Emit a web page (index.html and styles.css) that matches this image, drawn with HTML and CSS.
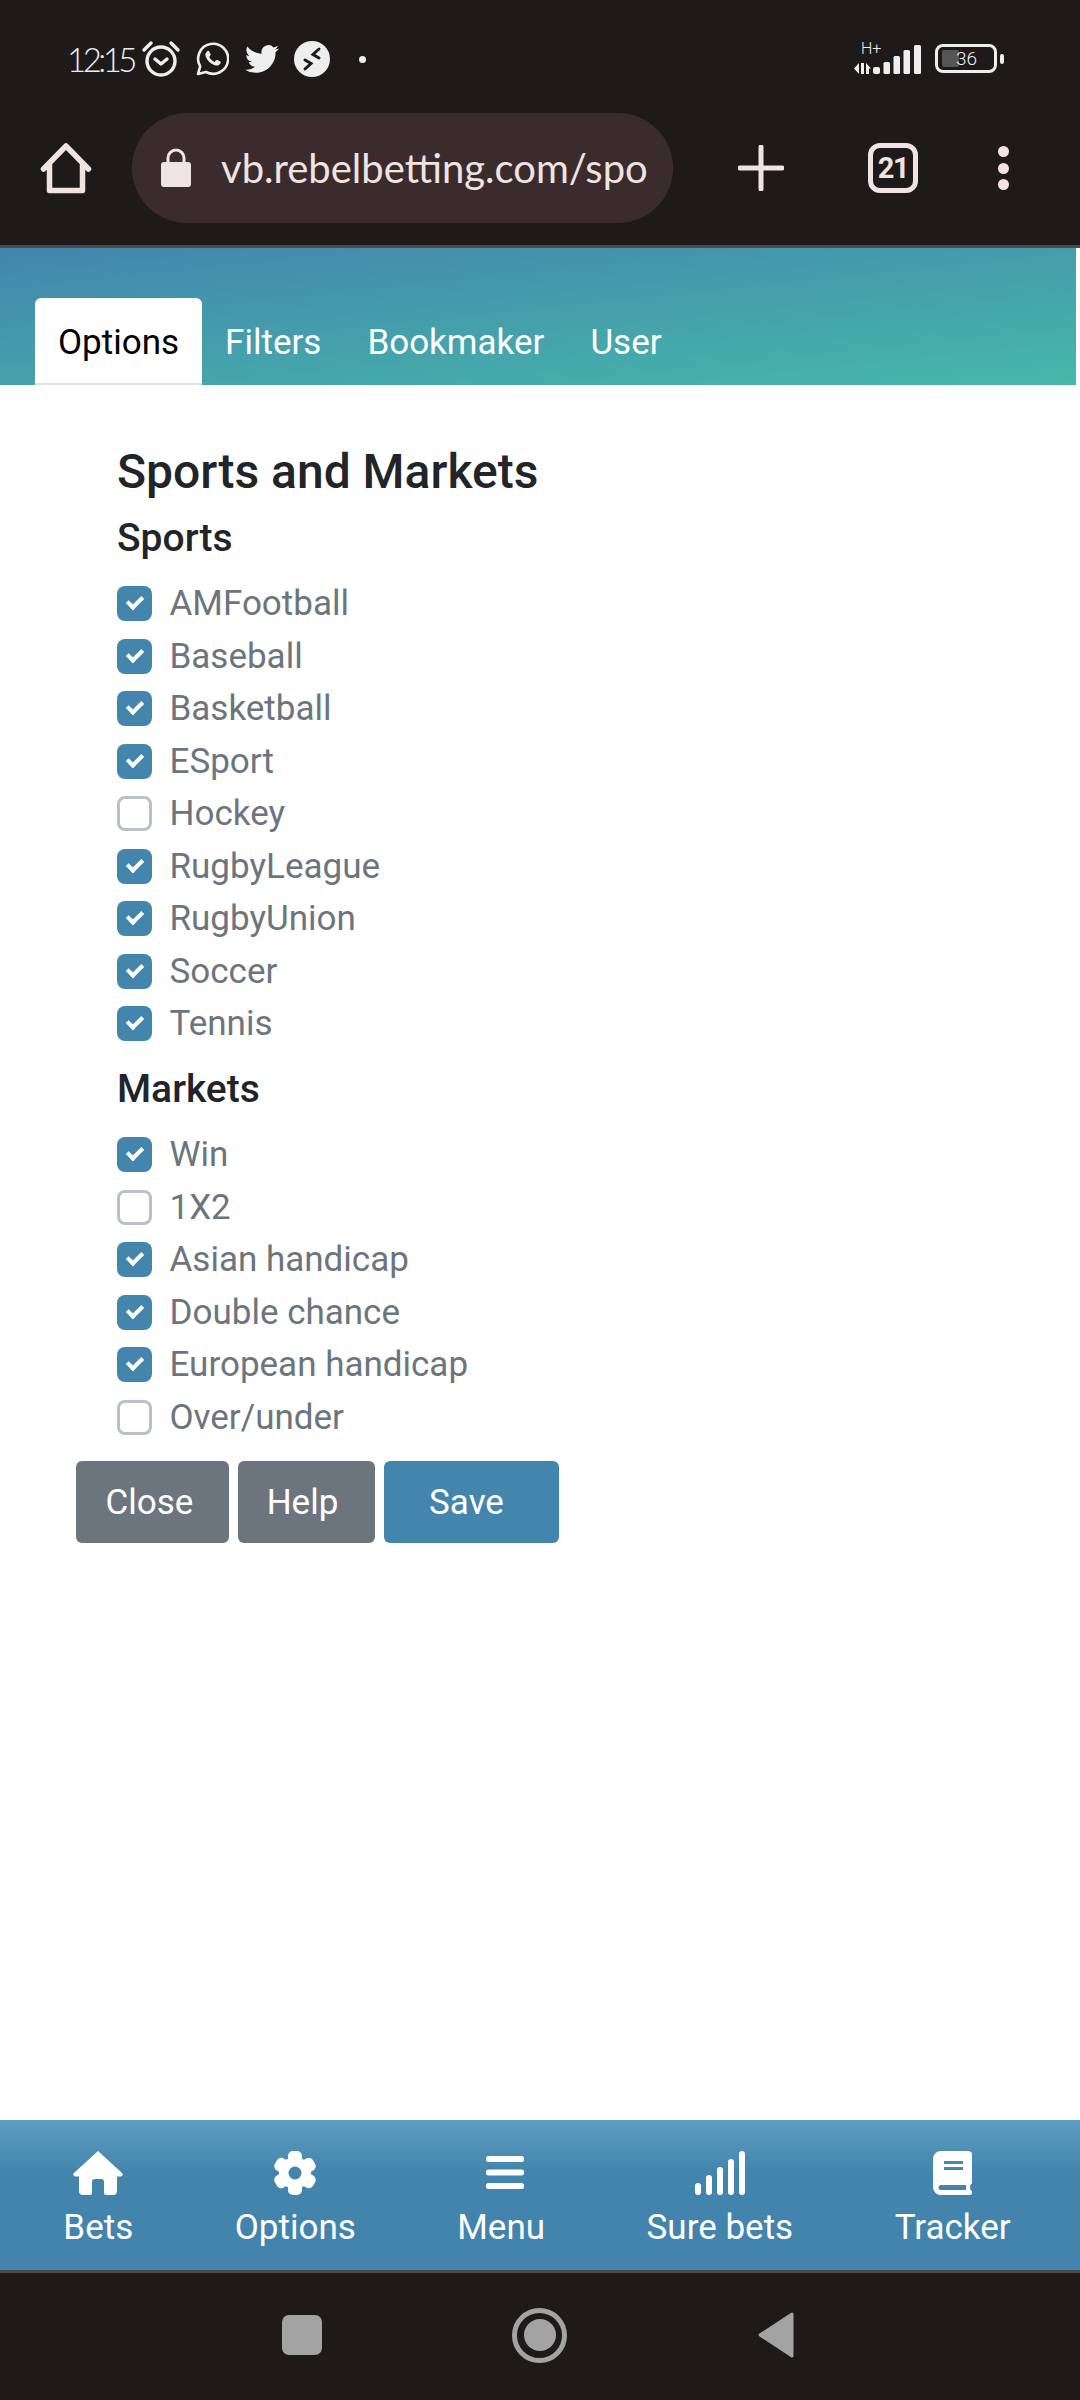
FILE: index.html
```html
<!DOCTYPE html>
<html lang="en">
<head>
    <meta charset="UTF-8">
    <meta name="viewport" content="width=device-width, initial-scale=1.0">
    <title>Sports and Markets</title>
    <link rel="stylesheet" href="styles.css">
</head>
<body>
    <!-- Phone status bar -->
    <div class="status-bar">
        <div class="status-left">
            <span class="clock">12:15</span>
            <svg class="alarm-icon" viewBox="0 0 40 40" width="40" height="40">
                <circle cx="20" cy="22" r="14" fill="none" stroke="#eee" stroke-width="3.4"/>
                <path d="M14 20l6 5 6-5" fill="none" stroke="#eee" stroke-width="3.4" stroke-linecap="round" stroke-linejoin="round"/>
                <path d="M3 11L10 4M37 11L30 4" fill="none" stroke="#eee" stroke-width="3.4" stroke-linecap="round"/>
            </svg>
            <svg class="whatsapp-icon" viewBox="0 0 34 36" width="34" height="36">
                <path d="M3 33l2.200-7.600A15 15 0 1 1 11 31z" fill="none" stroke="#eee" stroke-width="2.600" stroke-linejoin="round"/>
                <path d="M11.500 10.500c1-1 2.300-1 2.800 0l1.200 2.600c.3.700 0 1.200-.5 1.800l-.8 1c1.200 2.300 3 3.900 5.400 5l1.200-1.400c.5-.6 1.100-.7 1.700-.4l2.500 1.200c.9.500 1 1.400.4 2.300-1.200 1.900-3.400 2.500-5.800 1.600-4.300-1.600-7.500-4.800-9-9-.7-2-.2-3.600 1.900-4.700z" fill="#eee"/>
            </svg>
            <svg class="twitter-icon" viewBox="0 0 24 24" width="34" height="34">
                <path d="M23.950 4.570a10 10 0 0 1-2.820.77 4.960 4.960 0 0 0 2.160-2.720c-.95.550-2 .96-3.130 1.190a4.920 4.920 0 0 0-8.380 4.480C7.690 8.100 4.070 6.130 1.640 3.160a4.820 4.820 0 0 0-.67 2.480c0 1.710.87 3.210 2.190 4.100a4.900 4.900 0 0 1-2.230-.62v.06a4.920 4.920 0 0 0 3.950 4.830 5 5 0 0 1-2.210.08 4.940 4.940 0 0 0 4.600 3.420A9.870 9.870 0 0 1 0 19.540a14 14 0 0 0 7.560 2.210c9.050 0 14-7.500 14-13.980 0-.21 0-.42-.02-.63a9.940 9.940 0 0 0 2.460-2.550z" fill="#eee"/>
            </svg>
            <svg class="vpn-icon" viewBox="0 0 36 36" width="36" height="36">
                <circle cx="18" cy="18" r="18" fill="#eee"/>
                <path d="M11 19l6 3.500-6 5.500M25 8l-6 5.500 6 3.500" fill="none" stroke="#1f1a1a" stroke-width="3" stroke-linecap="round"/>
            </svg>
            <span class="more-dot"></span>
        </div>
        <div class="status-right">
            <div class="signal">
                <span class="signal-type">H+</span>
                <svg viewBox="0 0 67 29" width="67" height="29">
                    <path d="M5 18v11L0 23.500zM7 18h3v11H7zM12 18l5 5.500h-2V29h-3z" fill="#eee"/>
                    <rect x="19" y="22" width="7" height="7" rx="2" fill="#eee"/>
                    <rect x="29.500" y="17" width="6.500" height="12" rx="1.500" fill="#eee"/>
                    <rect x="39.500" y="11" width="6.500" height="18" rx="1.500" fill="#eee"/>
                    <rect x="49.500" y="5" width="6.500" height="24" rx="1.500" fill="#eee"/>
                    <rect x="60" y="0" width="7" height="29" rx="1.500" fill="#eee"/>
                </svg>
            </div>
            <div class="battery">
                <div class="battery-body"><span class="battery-level"></span><span class="battery-text">36</span></div>
                <span class="battery-tip"></span>
            </div>
        </div>
    </div>

    <!-- Browser toolbar -->
    <div class="toolbar">
        <svg class="toolbar-home" viewBox="0 0 52 52" width="52" height="52">
            <path d="M3.500 26L26 3l22.500 23M9.500 22v25.500h33V22" fill="none" stroke="#f0e4e2" stroke-width="5.500" stroke-linecap="round" stroke-linejoin="round"/>
        </svg>
        <div class="omnibox">
            <svg viewBox="0 0 30 40" width="30" height="40">
                <path d="M7 16v-6a8 8 0 0 1 16 0v6" fill="none" stroke="#f0e4e2" stroke-width="3"/>
                <rect x="0" y="14" width="30" height="25" rx="3" fill="#f0e4e2"/>
            </svg>
            <span class="url">vb.rebelbetting.com/spo</span>
        </div>
        <svg class="toolbar-plus" viewBox="0 0 46 46" width="46" height="46">
            <path d="M23 2v42M2 23h42" stroke="#f0e4e2" stroke-width="5" stroke-linecap="round"/>
        </svg>
        <div class="tab-count">21</div>
        <div class="toolbar-menu"><span></span><span></span><span></span></div>
    </div>

    <!-- Site header with tabs -->
    <div class="site-header">
        <ul class="tabs">
            <li class="tab active">Options</li>
            <li class="tab">Filters</li>
            <li class="tab">Bookmaker</li>
            <li class="tab">User</li>
        </ul>
    </div>

    <div class="content">
        <h2>Sports and Markets</h2>
        <h3 class="sports-title">Sports</h3>
        <ul class="check-list sports-list">
            <li class="check on">AMFootball</li>
            <li class="check on">Baseball</li>
            <li class="check on">Basketball</li>
            <li class="check on">ESport</li>
            <li class="check">Hockey</li>
            <li class="check on">RugbyLeague</li>
            <li class="check on">RugbyUnion</li>
            <li class="check on">Soccer</li>
            <li class="check on">Tennis</li>
        </ul>
        <h3 class="markets-title">Markets</h3>
        <ul class="check-list markets-list">
            <li class="check on">Win</li>
            <li class="check">1X2</li>
            <li class="check on">Asian handicap</li>
            <li class="check on">Double chance</li>
            <li class="check on">European handicap</li>
            <li class="check">Over/under</li>
        </ul>
        <div class="buttons">
            <button class="btn btn-close">Close</button>
            <button class="btn btn-help">Help</button>
            <button class="btn btn-save">Save</button>
        </div>
    </div>

    <!-- Site bottom menu -->
    <div class="bottom-menu">
        <div class="menu-item">
            <svg viewBox="0 0 50 44" width="50" height="44">
                <path d="M25 0L49 22c1.500 1.500.5 3.500-1.500 3.500H44V40a4 4 0 0 1-4 4h-7a2 2 0 0 1-2-2V31a3 3 0 0 0-3-3h-6a3 3 0 0 0-3 3v11a2 2 0 0 1-2 2h-7a4 4 0 0 1-4-4V25.500H2.500C.5 25.500-.5 23.500 1 22z" fill="#fff"/>
            </svg>
            <span>Bets</span>
        </div>
        <div class="menu-item">
            <svg viewBox="-22 -22 44 44" width="44" height="44">
                <g fill="#fff">
                    <circle r="16"/>
                    <rect x="-7" y="-22" width="14" height="44" rx="5"/>
                    <rect x="-7" y="-22" width="14" height="44" rx="5" transform="rotate(60)"/>
                    <rect x="-7" y="-22" width="14" height="44" rx="5" transform="rotate(120)"/>
                </g>
                <circle r="6.500" fill="#4284ac"/>
            </svg>
            <span>Options</span>
        </div>
        <div class="menu-item">
            <svg class="menu-icon" viewBox="0 0 38 44" width="38" height="44">
                <rect x="0" y="5" width="38" height="6" rx="2.500" fill="#fff"/>
                <rect x="0" y="18.500" width="38" height="6" rx="2.500" fill="#fff"/>
                <rect x="0" y="32" width="38" height="6" rx="2.500" fill="#fff"/>
            </svg>
            <span>Menu</span>
        </div>
        <div class="menu-item">
            <svg viewBox="0 0 50 44" width="50" height="44">
                <rect x="0" y="32" width="6" height="12" rx="3" fill="#fff"/>
                <rect x="11" y="24" width="6" height="20" rx="3" fill="#fff"/>
                <rect x="22" y="16" width="6" height="28" rx="3" fill="#fff"/>
                <rect x="33" y="8" width="6" height="36" rx="3" fill="#fff"/>
                <rect x="44" y="0" width="6" height="44" rx="3" fill="#fff"/>
            </svg>
            <span>Sure bets</span>
        </div>
        <div class="menu-item">
            <svg viewBox="0 0 39 44" width="39" height="44">
                <path fill-rule="evenodd" d="M8 0h27a4 4 0 0 1 4 4v27c0 1.500-.7 2.500-1.800 3v4.800c1 .4 1.800 1 1.800 2.200v.5a2.500 2.500 0 0 1-2.500 2.500H8a8 8 0 0 1-8-8V8a8 8 0 0 1 8-8zM11 10v3h19v-3zM11 16v3h19v-3zM8 34a2.500 2.500 0 0 0 0 5h25v-5z" fill="#fff"/>
            </svg>
            <span>Tracker</span>
        </div>
    </div>

    <!-- Android navigation bar -->
    <div class="nav-bar">
        <span class="nav-square"></span>
        <span class="nav-circle"><span></span></span>
        <svg viewBox="0 0 38 46" width="38" height="46">
            <path d="M35 2v42L3 23z" fill="#a3a3a3" stroke="#a3a3a3" stroke-width="3" stroke-linejoin="round"/>
        </svg>
    </div>
</body>
</html>
```
FILE: styles.css
```css
* {
    box-sizing: border-box;
}

body {
    font-family: Roboto, Arial, sans-serif;
    background-color: #fff;
    margin: 0;
    padding: 0;
    width: 1080px;
    height: 2400px;
    display: flex;
    flex-direction: column;
    overflow: hidden;
}

/* status bar */
.status-bar {
    height: 113px;
    background-color: #1f1a1a;
    display: flex;
    justify-content: space-between;
    padding: 40px 76px 0 67px;
    color: #eee;
}

.status-left {
    display: flex;
    align-items: center;
    height: 38px;
}

.clock {
    font-family: Lato, sans-serif;
    font-weight: 300;
    font-size: 33px;
    letter-spacing: -3.500px;
    width: 74px;
}

.alarm-icon {
    margin-right: 14px;
}

.whatsapp-icon {
    margin-right: 16px;
}

.twitter-icon {
    margin-right: 15px;
}

.more-dot {
    width: 7px;
    height: 7px;
    border-radius: 50%;
    background-color: #eee;
    margin-left: 29px;
}

.status-right {
    display: flex;
    align-items: flex-start;
    gap: 14px;
}

.signal {
    position: relative;
    width: 67px;
    height: 29px;
    margin-top: 5px;
}

.signal svg {
    display: block;
}

.signal-type {
    position: absolute;
    left: 7px;
    top: -4px;
    font-size: 16px;
    line-height: 16px;
    font-weight: 300;
}

.battery {
    display: flex;
    align-items: center;
    height: 29px;
    margin-top: 4px;
    gap: 3px;
}

.battery-body {
    position: relative;
    width: 62px;
    height: 29px;
    border: 3px solid #eee;
    border-radius: 8px;
}

.battery-level {
    position: absolute;
    left: 4px;
    top: 3px;
    bottom: 3px;
    width: 17px;
    background-color: #555;
    border-radius: 2px;
}

.battery-text {
    position: absolute;
    left: 18px;
    top: 0;
    font-size: 19px;
    line-height: 23px;
    font-weight: 300;
}

.battery-tip {
    width: 4px;
    height: 10px;
    background-color: #eee;
    border-radius: 2px;
}

/* browser toolbar */
.toolbar {
    height: 135px;
    background-color: #1f1a1a;
    border-bottom: 3px solid #504a4a;
    display: flex;
    align-items: flex-start;
    padding-left: 40px;
}

.toolbar-home {
    margin-top: 30px;
}

.omnibox {
    width: 541px;
    height: 110px;
    margin-left: 40px;
    background-color: #3a2c2c;
    border-radius: 55px;
    display: flex;
    align-items: center;
    padding-left: 29px;
    gap: 30px;
}

.url {
    font-family: Lato, sans-serif;
    font-size: 40px;
    color: #f0e4e2;
    white-space: nowrap;
}

.toolbar-plus {
    margin: 32px 0 0 65px;
}

.tab-count {
    width: 50px;
    height: 50px;
    margin: 30px 0 0 84px;
    border: 5px solid #f0e4e2;
    border-radius: 12px;
    color: #f0e4e2;
    font-size: 29px;
    font-weight: 700;
    letter-spacing: -1.500px;
    display: flex;
    align-items: center;
    justify-content: center;
}

.toolbar-menu {
    margin: 33px 0 0 80px;
    display: flex;
    flex-direction: column;
    gap: 5.500px;
}

.toolbar-menu span {
    width: 11px;
    height: 11px;
    border-radius: 50%;
    background-color: #f0e4e2;
}

/* site header */
.site-header {
    height: 137px;
    margin-right: 4px;
    background: linear-gradient(174deg, #4286ad 0%, #47b8aa 100%);
    display: flex;
    align-items: flex-end;
    padding-left: 35px;
}

.tabs {
    list-style: none;
    margin: 0;
    padding: 0;
    display: flex;
}

.tab {
    height: 87px;
    line-height: 90px;
    padding: 0 23px;
    font-size: 35px;
    color: #fff;
}

.tab.active {
    color: #000;
    background-color: #fff;
    border-radius: 6px 6px 0 0;
    border-bottom: 2px solid #dee2e6;
}

/* page content */
.content {
    flex: 1;
    padding: 61px 0 0 117px;
}

h2 {
    margin: 0;
    font-size: 48px;
    line-height: 52px;
    font-weight: 500;
    color: #212529;
}

h3 {
    margin: 0;
    font-size: 39px;
    line-height: 46px;
    font-weight: 500;
    color: #212529;
}

.sports-title {
    margin-top: 17px;
}

.markets-title {
    margin-top: 16.500px;
}

.check-list {
    list-style: none;
    margin: 0;
    padding: 0;
}

.sports-list {
    margin-top: 16px;
}

.markets-list {
    margin-top: 16px;
}

.check {
    position: relative;
    height: 52.500px;
    line-height: 54px;
    font-size: 35px;
    color: #6c757d;
    padding-left: 52.500px;
}

/* the box lies on top of the row, left of its label */
.check::before {
    content: "";
    box-sizing: border-box;
    position: absolute;
    left: 0;
    top: 9px;
    width: 35px;
    height: 35px;
    border: 3px solid #b9c1c7;
    border-radius: 8px;
    background-color: #fff;
}

.check.on::before {
    border: none;
    background-color: #4485ad;
}

.check.on::after {
    content: "";
    box-sizing: border-box;
    position: absolute;
    left: 10px;
    top: 19px;
    width: 16px;
    height: 10px;
    border-left: 4.500px solid #fff;
    border-bottom: 4.500px solid #fff;
    transform: rotate(-45deg);
}

.buttons {
    display: flex;
    gap: 9px;
    margin: 18px 0 0 -41px;
}

.btn {
    height: 82px;
    border: none;
    border-radius: 6px;
    color: #fff;
    font-family: Roboto, Arial, sans-serif;
    font-size: 35px;
    padding: 0;
}

.btn-close {
    width: 153px;
    background-color: #6c757d;
    padding-right: 6px;
}

.btn-help {
    width: 137px;
    background-color: #6c757d;
    padding-right: 8px;
}

.btn-save {
    width: 175px;
    background-color: #4485ad;
    padding-right: 10px;
}

/* bottom menu */
.bottom-menu {
    height: 153px;
    background: linear-gradient(180deg, #5e9dc1 0%, #4284ac 36%, #4284ac 100%);
    border-bottom: 3px solid #504a4a;
    display: flex;
    justify-content: center;
    gap: 101.500px;
    padding: 31px 6px 0 0;
    color: #fff;
}

.menu-item {
    display: flex;
    flex-direction: column;
    align-items: center;
    font-size: 35px;
}

.menu-item span {
    line-height: 42px;
    margin-top: 12px;
}

.menu-icon {
    margin-left: 8px;
}

/* navigation bar */
.nav-bar {
    height: 127px;
    background-color: #1f1a1a;
    display: flex;
    justify-content: center;
    align-items: center;
    gap: 190px;
    padding: 0 3px 3px 0;
}

.nav-square {
    width: 40px;
    height: 40px;
    background-color: #a3a3a3;
    border-radius: 7px;
}

.nav-circle {
    width: 55px;
    height: 55px;
    border: 5px solid #a3a3a3;
    border-radius: 50%;
    display: flex;
    align-items: center;
    justify-content: center;
}

.nav-circle span {
    width: 32px;
    height: 32px;
    background-color: #a3a3a3;
    border-radius: 50%;
}
```
